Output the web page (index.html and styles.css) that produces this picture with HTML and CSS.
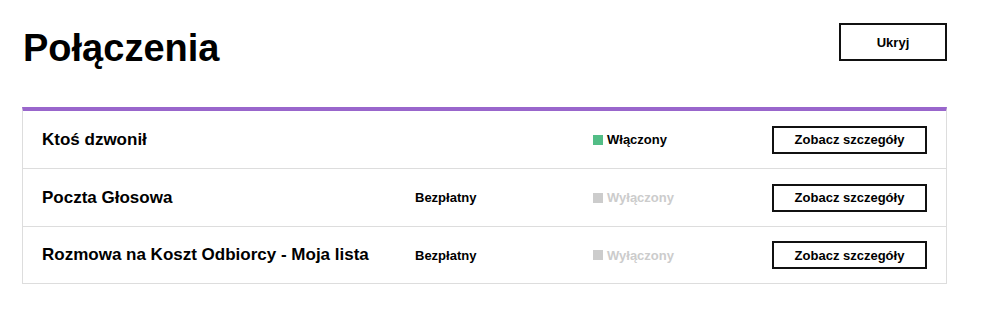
FILE: index.html
```html
<!DOCTYPE html>
<html>

<head>
  <meta charset="UTF-8">
  <title>Połączenia</title>
  <link rel="stylesheet" href="styles.css">
</head>

<body>
  <div class="page">
    <div class="header-row">
      <h1 class="main-header">Połączenia</h1>
      <button class="hide-button">Ukryj</button>
    </div>

    <div class="service-list">
      <div class="service-row">
        <div class="service-name">Ktoś dzwonił</div>
        <div class="service-price"></div>
        <div class="service-status status-on"><span class="status-dot"></span>Włączony</div>
        <button class="details-button">Zobacz szczegóły</button>
      </div>
      <div class="service-row">
        <div class="service-name">Poczta Głosowa</div>
        <div class="service-price">Bezpłatny</div>
        <div class="service-status status-off"><span class="status-dot"></span>Wyłączony</div>
        <button class="details-button">Zobacz szczegóły</button>
      </div>
      <div class="service-row">
        <div class="service-name">Rozmowa na Koszt Odbiorcy - Moja lista</div>
        <div class="service-price">Bezpłatny</div>
        <div class="service-status status-off"><span class="status-dot"></span>Wyłączony</div>
        <button class="details-button">Zobacz szczegóły</button>
      </div>
    </div>
  </div>
</body>

</html>
```

FILE: styles.css
```css
body {
  margin: 0;
  font-family: "Liberation Sans", Arial, sans-serif;
  background-color: white;
  color: #000;
}

.page {
  width: 925px;
  margin-left: 22px;
  padding-top: 23px;
}

.header-row {
  display: flex;
  justify-content: space-between;
  align-items: flex-start;
  height: 84px;
}

.main-header {
  margin: 3px 0 0 1px;
  font-size: 38px;
  line-height: 44px;
  font-weight: bold;
}

.hide-button {
  width: 108px;
  height: 38px;
  border: 2px solid #111;
  background: white;
  font-family: inherit;
  font-size: 13px;
  font-weight: bold;
  color: #000;
  cursor: pointer;
}

.service-list {
  border: 1px solid #ddd;
  border-top: 4px solid #9966cc;
}

.service-row {
  display: grid;
  grid-template-columns: 373px 178px 179px 155px;
  align-items: center;
  height: 57px;
  padding: 0 19px;
  border-bottom: 1px solid #ddd;
}

.service-row:last-child {
  height: 56px;
  border-bottom: none;
}

.service-name {
  font-size: 17px;
  font-weight: bold;
}

.service-price {
  font-size: 13px;
  font-weight: bold;
}

.service-status {
  display: flex;
  align-items: center;
  font-size: 13px;
  font-weight: bold;
}

.status-dot {
  width: 10px;
  height: 10px;
  margin-right: 4px;
}

.status-on .status-dot {
  background: #52bd86;
}

.status-off {
  color: #ccc;
}

.status-off .status-dot {
  background: #ccc;
}

.details-button {
  width: 155px;
  height: 28px;
  border: 2px solid #111;
  background: white;
  font-family: inherit;
  font-size: 13px;
  font-weight: bold;
  color: #000;
  cursor: pointer;
}
```
